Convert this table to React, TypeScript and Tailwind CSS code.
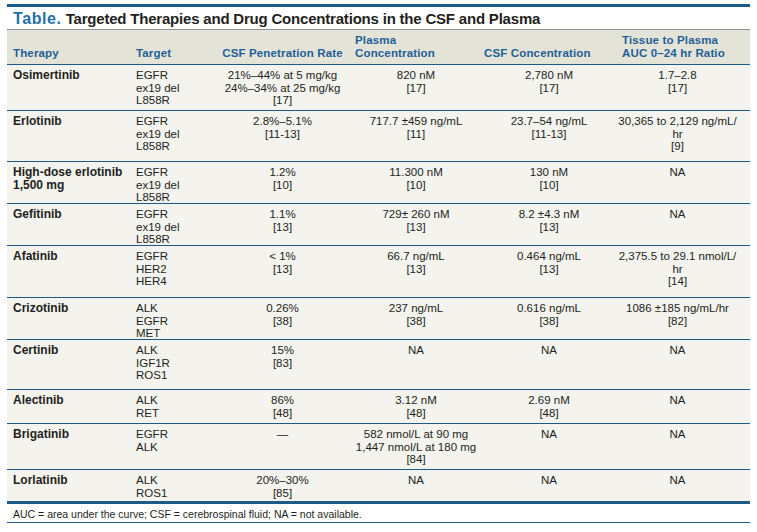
import React from "react";

type Row = {
  name: React.ReactNode;
  target: string[];
  csf: string[];
  plasma: string[];
  csfc: string[];
  ratio: string[];
  h: string;
  last?: boolean;
};

const rows: Row[] = [
  {
    name: "Osimertinib",
    target: ["EGFR", "ex19 del", "L858R"],
    csf: ["21%–44% at 5 mg/kg", "24%–34% at 25 mg/kg", "[17]"],
    plasma: ["820 nM", "[17]"],
    csfc: ["2,780 nM", "[17]"],
    ratio: ["1.7–2.8", "[17]"],
    h: "h-[46px]",
  },
  {
    name: "Erlotinib",
    target: ["EGFR", "ex19 del", "L858R"],
    csf: ["2.8%–5.1%", "[11-13]"],
    plasma: ["717.7 ±459 ng/mL", "[11]"],
    csfc: ["23.7–54 ng/mL", "[11-13]"],
    ratio: ["30,365 to 2,129 ng/mL/", "hr", "[9]"],
    h: "h-[51px]",
  },
  {
    name: (
      <>
        <div>High-dose erlotinib</div>
        <div>1,500 mg</div>
      </>
    ),
    target: ["EGFR", "ex19 del", "L858R"],
    csf: ["1.2%", "[10]"],
    plasma: ["11.300 nM", "[10]"],
    csfc: ["130 nM", "[10]"],
    ratio: ["NA"],
    h: "h-[42px]",
  },
  {
    name: "Gefitinib",
    target: ["EGFR", "ex19 del", "L858R"],
    csf: ["1.1%", "[13]"],
    plasma: ["729± 260 nM", "[13]"],
    csfc: ["8.2 ±4.3 nM", "[13]"],
    ratio: ["NA"],
    h: "h-[42px]",
  },
  {
    name: "Afatinib",
    target: ["EGFR", "HER2", "HER4"],
    csf: ["< 1%", "[13]"],
    plasma: ["66.7 ng/mL", "[13]"],
    csfc: ["0.464 ng/mL", "[13]"],
    ratio: ["2,375.5 to 29.1 nmol/L/", "hr", "[14]"],
    h: "h-[52px]",
  },
  {
    name: "Crizotinib",
    target: ["ALK", "EGFR", "MET"],
    csf: ["0.26%", "[38]"],
    plasma: ["237 ng/mL", "[38]"],
    csfc: ["0.616 ng/mL", "[38]"],
    ratio: ["1086 ±185 ng/mL/hr", "[82]"],
    h: "h-[42px]",
  },
  {
    name: "Certinib",
    target: ["ALK", "IGF1R", "ROS1"],
    csf: ["15%", "[83]"],
    plasma: ["NA"],
    csfc: ["NA"],
    ratio: ["NA"],
    h: "h-[50px]",
  },
  {
    name: "Alectinib",
    target: ["ALK", "RET"],
    csf: ["86%", "[48]"],
    plasma: ["3.12 nM", "[48]"],
    csfc: ["2.69 nM", "[48]"],
    ratio: ["NA"],
    h: "h-[34px]",
  },
  {
    name: "Brigatinib",
    target: ["EGFR", "ALK"],
    csf: ["—"],
    plasma: ["582 nmol/L at 90 mg", "1,447 nmol/L at 180 mg", "[84]"],
    csfc: ["NA"],
    ratio: ["NA"],
    h: "h-[46px]",
  },
  {
    name: "Lorlatinib",
    target: ["ALK", "ROS1"],
    csf: ["20%–30%", "[85]"],
    plasma: ["NA"],
    csfc: ["NA"],
    ratio: ["NA"],
    h: "h-[34px]",
    last: true,
  },
];

function Lines({ items }: { items: string[] }) {
  return (
    <>
      {items.map((t, i) => (
        <div key={i} className="whitespace-nowrap">
          {t}
        </div>
      ))}
    </>
  );
}

export default function App() {
  return (
    <div className="w-[757px] h-[532px] bg-white font-['Liberation_Sans','Arial',sans-serif] text-[#231f20]">
      <div className="ml-[7px] w-[743px] pt-[4px]">
        {/* top bar */}
        <div className="h-[3px] bg-[#1d5a89]" />
        {/* title */}
        <div className="h-[22px] pt-[2px] pl-[6px] leading-[20px] whitespace-nowrap">
          <span className="text-[16px] font-bold tracking-[0.6px] text-[#2170a8]">Table.</span>
          <span className="text-[15px] font-bold tracking-[-0.2px] ml-[4px]">
            Targeted Therapies and Drug Concentrations in the CSF and Plasma
          </span>
        </div>
        {/* header */}
        <div className="grid grid-cols-[123px_85px_135px_132px_134px_134px] h-[36px] border-t border-b border-t-[#8c969c] border-b-[#1d5a89] bg-[#e4e3d8] text-[11.5px] tracking-[0.15px] leading-[13px] font-bold text-[#1f5f96] items-end pb-[4px]">
          <div className="pl-[6px]">Therapy</div>
          <div className="pl-[6px]">Target</div>
          <div className="text-center whitespace-nowrap">CSF Penetration Rate</div>
          <div className="pl-[5px]">
            <div>Plasma</div>
            <div>Concentration</div>
          </div>
          <div className="pl-[2px] whitespace-nowrap">CSF Concentration</div>
          <div className="pl-[6px] whitespace-nowrap">
            <div>Tissue to Plasma</div>
            <div>AUC 0–24 hr Ratio</div>
          </div>
        </div>
        {/* body */}
        <div className="bg-[#f4f3ee]">
          {rows.map((r, i) => (
            <div
              key={i}
              className={`grid grid-cols-[123px_85px_135px_132px_134px_134px] ${r.h} ${
                r.last ? "border-b-[3px]" : "border-b"
              } border-[#1d5a89] pt-[4px] text-[11.5px] leading-[12.5px]`}
            >
              <div className="pl-[6px] font-bold text-[12px] whitespace-nowrap">{r.name}</div>
              <div className="pl-[6px]">
                <Lines items={r.target} />
              </div>
              <div className="text-center">
                <Lines items={r.csf} />
              </div>
              <div className="text-center">
                <Lines items={r.plasma} />
              </div>
              <div className="text-center">
                <Lines items={r.csfc} />
              </div>
              <div className="text-center pr-[11px]">
                <Lines items={r.ratio} />
              </div>
            </div>
          ))}
        </div>
        {/* footnote */}
        <div className="h-[19px] border-b border-[#1d5a89] pt-[3px] pl-[6px] text-[10.5px] leading-[14px] whitespace-nowrap">
          AUC = area under the curve; CSF = cerebrospinal fluid; NA = not available.
        </div>
      </div>
    </div>
  );
}
